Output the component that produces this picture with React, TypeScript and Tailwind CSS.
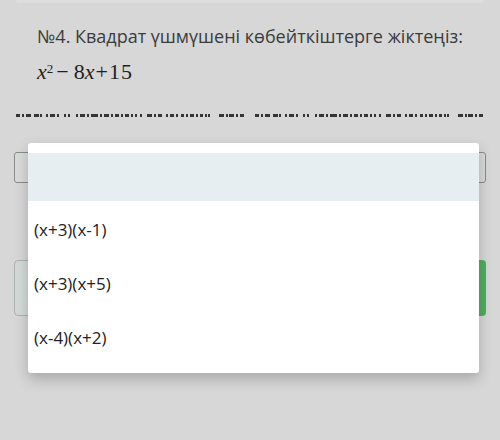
import React from "react";

// dotted rule under the task text: [x, width] pairs for one half, drawn twice
const ruleBits: [number, number][] = [
  [0, 4], [6, 2], [10, 5], [18, 5], [24, 2], [30, 2], [34, 5], [41, 2],
  [48, 2], [52, 2], [60, 2], [64, 5], [71, 2], [75, 7], [84, 2], [88, 5],
  [95, 2], [99, 4], [105, 2], [109, 4], [115, 2], [119, 2], [124, 2],
  [131, 5], [138, 2], [142, 4], [150, 2], [154, 4], [160, 2], [165, 3],
  [170, 2], [174, 4], [180, 2], [184, 3], [189, 2], [192, 2],
  [203, 5], [210, 2], [213, 5], [220, 2], [224, 4],
];

const options = ["(x+3)(x-1)", "(x+3)(x+5)", "(x-4)(x+2)"];

function DottedRule() {
  return (
    <svg width="480" height="4" viewBox="0 0 480 4" className="block">
      {[0, 239].map((off) =>
        ruleBits.map(([x, w], i) => (
          <rect key={`${off}-${i}`} x={off + x} y={0} width={w} height={3} fill="#343635" />
        ))
      )}
    </svg>
  );
}

export default function App() {
  return (
    <div
      className="relative w-[500px] h-[440px] overflow-hidden bg-[#d6d7d6]"
      style={{ fontFamily: '"Open Sans", "Noto Sans", sans-serif' }}
    >
      {/* bottom edge of the previous card */}
      <div className="mx-[16px] h-[3px] rounded-b-[3px] bg-[#dcdddc]" />

      <div className="px-[37px] pt-[21px]">
        <h2 className="text-[18px] leading-[24px] text-[#3b3c3c]">
          №4. Квадрат үшмүшені көбейткіштерге жіктеңіз:
        </h2>
        <div
          className="mt-[12px] text-[22px] leading-[24px] text-[#1f1f1f]"
          style={{ fontFamily: '"Liberation Serif", serif' }}
        >
          <i>x</i>
          <sup className="text-[13px]">2</sup>
          <span className="ml-[3px]">−</span>
          <span className="ml-[5px]">8</span>
          <i>x</i>
          <span className="ml-[1px]">+</span>
          <span className="ml-[1px] tracking-[1px]">15</span>
        </div>
      </div>

      <div className="pl-[16px] mt-[30px]">
        <DottedRule />
      </div>

      {/* select field */}
      <div className="mx-[14px] mt-[34px] h-[31px] rounded-[3px] border border-[#878c89] bg-[#d9dbda] flex items-center justify-end pr-[6px]">
        <svg width="12" height="8" viewBox="0 0 12 8" fill="none" stroke="#7c807e" strokeWidth="1.6">
          <path d="M1 1l5 5 5-5" />
        </svg>
      </div>

      {/* answer row */}
      <div className="mx-[14px] mt-[77px] h-[56px] flex gap-[8px]">
        <div className="flex-1 rounded-[4px] border border-[#aab1ae] bg-[#d4dad7]" />
        <div className="w-[110px] rounded-[4px] bg-[#4fae5d]" />
      </div>

      {/* open options list */}
      <div className="absolute left-[28px] top-[143px] w-[451px] rounded-[3px] bg-white pt-[10px] pb-[10px] shadow-[0_6px_14px_rgba(0,0,0,0.22)]">
        <div className="h-[48px] bg-[#e6eef1]" />
        {options.map((o) => (
          <div key={o} className="h-[54px] flex items-center pl-[6px] pt-[3px] text-[17px] text-[#222]">
            {o}
          </div>
        ))}
      </div>
    </div>
  );
}
